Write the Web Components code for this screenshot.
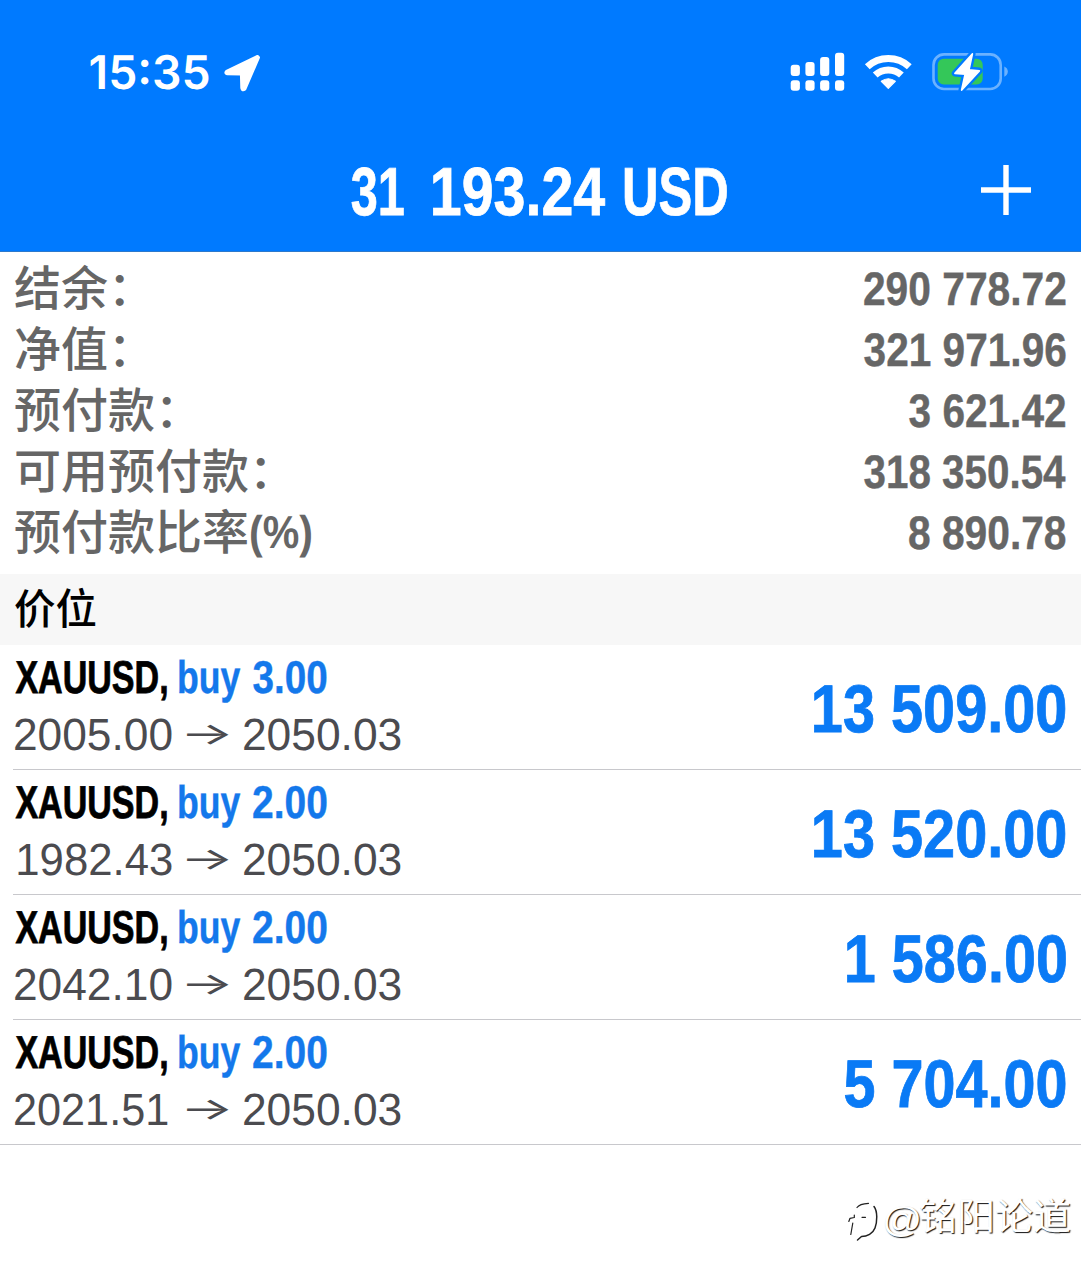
<!DOCTYPE html>
<html lang="zh-CN">
<head>
<meta charset="utf-8">
<title>Trade</title>
<style>
html,body{margin:0;padding:0;background:#fff}
body{width:1081px;height:1280px;overflow:hidden;font-family:"Liberation Sans","Noto Sans CJK SC",sans-serif}
</style>
</head>
<body>
<trade-app></trade-app>
<script>
const NARROW = '"Liberation Sans Narrow","Liberation Sans","Noto Sans CJK SC",sans-serif';
const SANS = '"Liberation Sans","Noto Sans CJK SC",sans-serif';
const pen = document.createElement('canvas').getContext('2d');

/* One line of text whose inked glyphs span exactly `w` pixels. */
class FitText extends HTMLElement {
  connectedCallback() {
    const size = +this.getAttribute('size'), w = +this.getAttribute('w'), lh = this.getAttribute('lh') || 58;
    const weight = this.getAttribute('weight') || 700;
    const face = this.getAttribute('face');
    const bold = this.getAttribute('bold') || 0;
    const family = face === 'sans' ? SANS : face ? `"${face}",sans-serif` : NARROW;
    const text = this.getAttribute('text');
    /* Measured at ten times the size, so that the bounds are not rounded to whole pixels. */
    pen.font = `${weight} ${size*10}px ${family}`;
    const m = pen.measureText(text);
    const left = m.actualBoundingBoxLeft/10, ink = m.actualBoundingBoxRight/10 + left;
    const s = (w - bold) / ink;
    const root = this.attachShadow({mode:'open'});
    root.innerHTML = `<style>
      :host{display:block;flex:none;width:${w}px;height:${lh}px}
      span{display:inline-block;white-space:pre;font:${weight} ${size}px/${lh}px ${family.replace(/"/g,"'")};
        text-rendering:geometricPrecision;font-feature-settings:"case","calt";-webkit-text-stroke:${bold}px currentColor;
        transform-origin:0 0;transform:translateX(${(left*s + bold/2).toFixed(3)}px) scaleX(${s.toFixed(4)})}
    </style><span></span>`;
    root.querySelector('span').textContent = text;
  }
}
customElements.define('fit-text', FitText);

function define(name, html) {
  customElements.define(name, class extends HTMLElement {
    connectedCallback() {
      this.attachShadow({mode:'open'}).innerHTML = typeof html === 'function' ? html(this) : html;
    }
  });
}

define('status-bar', `<style>
  :host{display:flex;height:144px;align-items:center;color:#fff;padding:0 73px 0 89.5px;box-sizing:border-box}
  svg{display:block;flex:none}
  .time{margin-top:2px}.arrow{margin-left:13.5px}.signal{margin-left:auto}.wifi{margin-left:18px}.battery{margin-left:18px}
</style>
<fit-text class="time" text="15:35" face="Inter" weight="600" size="46.5" w="119"></fit-text>
<svg class="arrow" width="40" height="40" viewBox="222 52 40 40"><path d="M257.5 56.2L226.5 71.2Q224.5 73.3 227.2 73.9L241.2 74.3L241.6 88Q242.2 91.3 245 89.3L258.7 57.4Z" fill="#fff" stroke="#fff" stroke-width="2.6" stroke-linejoin="round"/></svg>
<svg class="signal" width="56" height="40" viewBox="790 52 56 40" fill="#fff">
  <rect x="790.7" y="64.7" width="9.2" height="11.2" rx="3"/><rect x="805.4" y="62" width="9.2" height="13.9" rx="3"/><rect x="820.1" y="57" width="9.2" height="18.9" rx="3"/><rect x="835" y="52.7" width="9.2" height="23.2" rx="3"/>
  <rect x="790.7" y="80.3" width="9.2" height="10.4" rx="3"/><rect x="805.4" y="80.3" width="9.2" height="10.4" rx="3"/><rect x="820.1" y="80.3" width="9.2" height="10.4" rx="3"/><rect x="835" y="80.3" width="9.2" height="10.4" rx="3"/>
</svg>
<svg class="wifi" width="50" height="40" viewBox="864 52 50 40">
  <g fill="none" stroke="#fff" stroke-width="7"><path d="M867.3 66.7A31 31 0 0 1 909.3 66.7"/><path d="M875.2 75A19.4 19.4 0 0 1 901.4 75"/></g>
  <path d="M888.3 88.3L881.3 81.3Q888.3 76.2 895.3 81.3Z" fill="#fff" stroke="#fff" stroke-width="1.2" stroke-linejoin="round"/>
</svg>
<svg class="battery" width="76" height="40" viewBox="932 52 76 40">
  <rect x="933.5" y="54.4" width="67.2" height="34.6" rx="10.5" fill="none" stroke="#fff" stroke-opacity=".42" stroke-width="2.6"/>
  <rect x="937.7" y="58.8" width="45" height="25.6" rx="6" fill="#34c759"/>
  <path d="M1004.3 66.5Q1007.8 68 1007.8 71.6Q1007.8 75.2 1004.3 76.7Z" fill="#fff" fill-opacity=".42"/>
  <path d="M972.3 54L955 73.3L965.2 74.2L961.7 90L979.3 70.8L968.9 69.8Z" fill="#007aff" stroke="#007aff" stroke-width="6.5" stroke-linejoin="round"/>
  <path d="M972.3 54L955 73.3L965.2 74.2L961.7 90L979.3 70.8L968.9 69.8Z" fill="#fff" stroke="#fff" stroke-width="1.8" stroke-linejoin="round"/>
</svg>`);

define('nav-bar', `<style>
  :host{display:grid;grid-template-columns:1fr auto 1fr;align-items:center;height:92px;color:#fff;padding-right:2px}
  .balance{grid-column:2;margin-top:4px;display:flex}
  .balance :nth-child(2){margin:0 18.5px 0 28.5px}
  svg{justify-self:end;margin-right:48px}
</style>
<div class="balance"><fit-text text="31" size="68" w="53" lh="80" bold=".8"></fit-text><fit-text text="193.24" size="68" w="173" lh="80" bold=".8"></fit-text><fit-text text="USD" size="68" w="103.5" lh="80" bold=".8"></fit-text></div>
<svg width="50" height="50" viewBox="0 0 50 50"><path d="M0 25H50M25 0V50" stroke="#fff" stroke-width="5.4"/></svg>`);

define('summary-row', el => `<style>
  :host{display:flex;height:61px;align-items:center;color:#666;padding:0 15px 0 14px}
  .v{margin-left:auto}.label{display:flex;align-items:center}
  .label span{font:500 47px/61px "Liberation Sans","Noto Sans CJK SC",sans-serif;white-space:nowrap}
  .unit{margin-left:2px}
</style>
<div class="label"><span>${el.getAttribute('label')}</span>${el.hasAttribute('unit') ? `<fit-text class="unit" text="${el.getAttribute('unit')}" size="46" w="60.5" lh="61"></fit-text>` : ''}</div>
<fit-text class="v" text="${el.getAttribute('value')}" size="47" w="${el.getAttribute('w')}" lh="61" bold=".4"></fit-text>`);

define('section-title', `<style>
  :host{display:block;height:71px;background:#f7f7f7;color:#000;padding-left:14px;font:500 41.5px/72px "Liberation Sans","Noto Sans CJK SC",sans-serif}
</style><slot></slot>`);

define('position-row', el => {
  const a = n => el.getAttribute(n);
  return `<style>
  :host{display:block;padding-left:13px}
  :host([last]){padding-left:0}
  .row{display:flex;height:124px;border-bottom:1px solid #c8c8cc;padding:0 15.5px 0 1.5px}
  :host([last]) .row{padding-left:14.5px}
  .info{padding-top:3px}
  .line{display:flex;height:58px}
  .name{color:#000;margin-right:12.5px}.side{color:#1478eb}.side+.side{margin-left:12.5px}
  .price{color:#4b4b4f}
  .open{width:157.5px;display:flex;margin-right:15px}
  .arrow{margin:1px 15px 0 0}
  .profit{margin:5px 0 0 auto;color:#0a7af5}
  </style>
  <div class="row"><div class="info">
    <div class="line"><fit-text class="name" text="XAUUSD," size="46" w="152" bold=".8"></fit-text><fit-text class="side" text="buy" size="46" w="61.7" bold=".4"></fit-text><fit-text class="side" text="${a('lots')}" size="46" w="73.5" bold=".4"></fit-text></div>
    <div class="line price"><div class="open"><fit-text style="margin-left:${a('ox')||0}px" text="${a('open')}" face="sans" weight="400" size="45" w="${a('ow')}"></fit-text></div><fit-text class="arrow" text="→" face="Inter" weight="400" size="31" w="41.5"></fit-text><fit-text text="2050.03" face="sans" weight="400" size="45" w="156.5"></fit-text></div>
  </div><fit-text class="profit" text="${a('profit')}" size="67.5" w="${a('pw')}" lh="120" bold=".8"></fit-text></div>`;
});

define('water-mark', `<style>
  :host{display:flex;justify-content:flex-end;align-items:center;margin-top:46px;height:60px;padding-right:11px;color:#fff}
  fit-text{text-shadow:1px 1px 1px #111}
  svg{margin-right:7px}.at{margin:-2px 1px 0 0}.name{margin-top:-15px}
</style>
<svg width="34" height="46" viewBox="844 1200 34 46" fill="none" stroke="#222" stroke-width="1.2" stroke-linecap="round" stroke-linejoin="round">
  <path d="M848.8 1223.5L850 1220.3L854.3 1219.5V1217M850.8 1236.5L852.8 1225M857 1209.5Q859.5 1205.8 868.5 1205.3M862 1219.3H865.5"/>
  <path d="M874 1208.5C877.8 1213.5 877.2 1224 875 1230C873 1235.5 867 1238.5 861.5 1238.5L857.5 1242" stroke-width="1.5"/>
</svg>
<fit-text class="at" text="@" face="sans" weight="400" size="36" w="34"></fit-text>
<fit-text class="name" text="铭阳论道" face="Noto Sans CJK SC" weight="400" size="38" w="150"></fit-text>`);

define('trade-app', `<style>
  :host{display:block;width:1081px;height:1280px;background:#fff}
  header{height:252px;box-sizing:border-box;background:#007aff;border-bottom:1px solid #2c79cc}
  .summary{padding:6px 0 11px}
</style>
<header><status-bar></status-bar><nav-bar></nav-bar></header>
<div class="summary">
  <summary-row label="结余：" value="290 778.72" w="202"></summary-row>
  <summary-row label="净值：" value="321 971.96" w="202"></summary-row>
  <summary-row label="预付款：" value="3 621.42" w="156.7"></summary-row>
  <summary-row label="可用预付款：" value="318 350.54" w="202"></summary-row>
  <summary-row label="预付款比率" unit="(%)" value="8 890.78" w="156.7"></summary-row>
</div>
<section-title>价位</section-title>
<position-row lots="3.00" open="2005.00" ow="157" profit="13 509.00" pw="251.5"></position-row>
<position-row lots="2.00" open="1982.43" ow="153.5" ox="3.5" profit="13 520.00" pw="251.5"></position-row>
<position-row lots="2.00" open="2042.10" ow="157" profit="1 586.00" pw="219"></position-row>
<position-row last lots="2.00" open="2021.51" ow="152.5" profit="5 704.00" pw="221.5"></position-row>
<water-mark></water-mark>`);
</script>
</body>
</html>
